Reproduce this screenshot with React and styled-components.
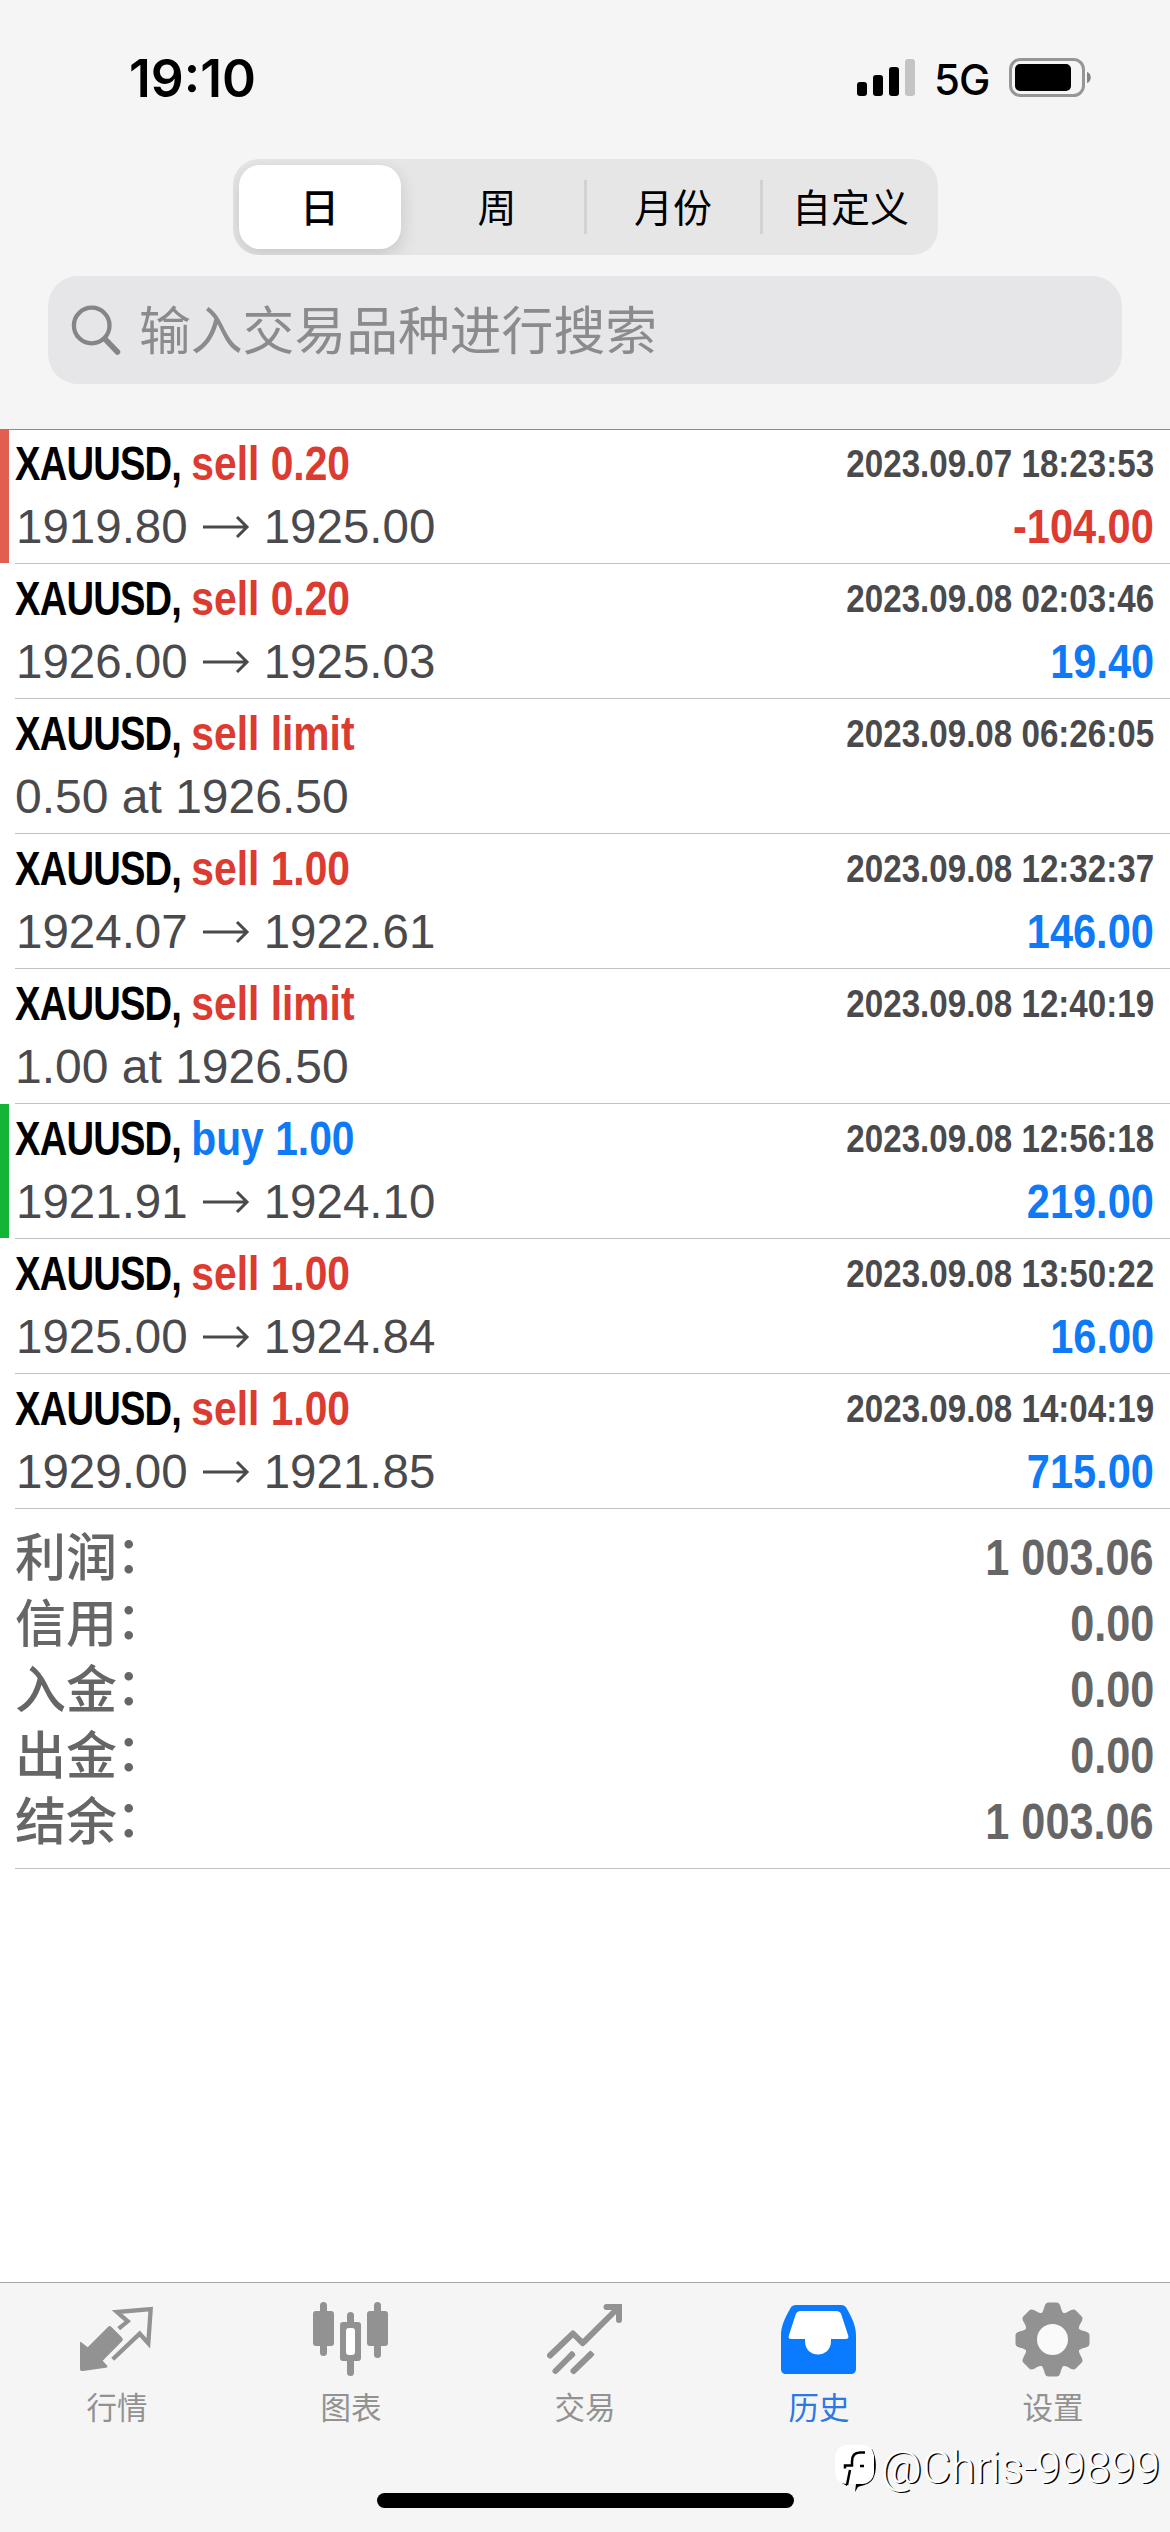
import React from 'react';
import styled, { createGlobalStyle } from 'styled-components';

const GlobalStyle = createGlobalStyle`
  * {
    box-sizing: border-box;
  }
  body {
    margin: 0;
    background: #fff;
    font-family: Inter, 'Noto Sans CJK SC', sans-serif;
  }
`;

// --- STYLES ---

const Screen = styled.div`
  display: flex;
  flex-direction: column;
  width: 1170px;
  height: 2532px;
  background: #fff;
  overflow: hidden;
`;

const Header = styled.header`
  height: 430px;
  display: flex;
  flex-direction: column;
  align-items: center;
  background: #f5f5f5;
  border-bottom: 1px solid #8c8c8e;
`;

const StatusBar = styled.div`
  align-self: stretch;
  height: 159px;
  padding: 0 78px 3px 129px;
  display: flex;
  align-items: center;
  justify-content: space-between;
`;

const Clock = styled.span`
  font-size: 51.5px;
  font-weight: 600;
  color: #000;
`;

const StatusIcons = styled.div`
  display: flex;
  align-items: center;
`;

const Network = styled.span`
  margin: 3px 20px 0 19px;
  width: 55px;
  font-size: 42px;
  line-height: 42px;
  font-weight: 500;
  letter-spacing: -1px;
  color: #000;
`;

const Segments = styled.div`
  width: 705px;
  height: 96px;
  padding: 6px 0 6px 6px;
  display: flex;
  align-items: center;
  border-radius: 26px;
  background: #e6e6e7;
  overflow: hidden;
`;

const Segment = styled.button`
  flex-shrink: 0;
  width: ${({ $active }) => ($active ? 162 : 176)}px;
  height: ${({ $active }) => ($active ? 84 : 54)}px;
  margin-right: ${({ $active }) => ($active ? 10 : 0)}px;
  padding: 0 0 5px;
  border: 0;
  border-right: ${({ $divider }) => ($divider ? '3px solid #d2d2d4' : '0')};
  border-radius: ${({ $active }) => ($active ? 21 : 0)}px;
  background: ${({ $active }) => ($active ? '#fff' : 'transparent')};
  box-shadow: ${({ $active }) => ($active ? '0 6px 18px rgba(0, 0, 0, 0.14)' : 'none')};
  font-family: 'Noto Sans CJK SC', sans-serif;
  font-size: 39px;
  line-height: 50px;
  font-weight: ${({ $active }) => ($active ? 500 : 400)};
  color: #000;
`;

const SearchBar = styled.div`
  width: 1074px;
  height: 108px;
  margin-top: 21px;
  padding-left: 23px;
  display: flex;
  align-items: center;
  gap: 16px;
  border-radius: 30px;
  background: #e6e6e8;
`;

const Placeholder = styled.span`
  padding-bottom: 5px;
  font-family: 'Noto Sans CJK SC', sans-serif;
  font-size: 51.8px;
  line-height: 60px;
  color: #8b8b8e;
`;

const Deals = styled.main`
  flex: 1;
  margin-top: -1px;
`;

const Deal = styled.section`
  position: relative;
  height: 135px;
  margin-left: 15px;
  padding: 0 16px 0 0;
  border-bottom: 1px solid #c2c2c4;
  display: flex;
  flex-direction: column;
`;

const Marker = styled.span`
  position: absolute;
  left: -15px;
  top: 0;
  width: 9px;
  height: 134px;
  background: ${({ $color }) => $color};
`;

const Line = styled.div`
  display: flex;
  justify-content: space-between;
  align-items: center;
  height: ${({ $height }) => $height}px;
  white-space: pre;
`;

// condensed bold face: regular width glyphs squeezed towards the row's edge
const Condensed = styled.span`
  display: block;
  font-family: 'Liberation Sans', sans-serif;
  font-weight: 700;
  font-size: ${({ $size }) => $size || 48}px;
  line-height: 56px;
  color: ${({ $color }) => $color || '#000'};
  transform: scaleX(${({ $scale }) => $scale || 0.865});
  transform-origin: ${({ $origin }) => $origin || 'right'} center;
`;

const Symbol = styled.span`
  display: inline-block;
  margin-right: -14px;
  letter-spacing: -1px;
  transform: scaleX(0.935);
  transform-origin: left center;
`;

const Side = styled.span`
  color: ${({ $color }) => $color};
`;

const Prices = styled.span`
  display: flex;
  align-items: center;
  padding-left: ${({ $order }) => ($order ? 0 : 1)}px;
  font-family: 'Liberation Sans', sans-serif;
  font-size: ${({ $order }) => ($order ? 48 : 47.5)}px;
  line-height: 56px;
  color: #4a4a4d;

  svg {
    margin: 0 14px 0 14px;
  }
`;

const Summary = styled.section`
  margin-left: 15px;
  padding: 16px 16px 13px 0;
  border-bottom: 1px solid #c2c2c4;
`;

const SummaryRow = styled.div`
  height: 66px;
  display: flex;
  align-items: center;
  justify-content: space-between;
`;

const SummaryLabel = styled.span`
  padding-top: 2px;
  font-family: 'Liberation Sans', 'Noto Sans CJK SC', sans-serif;
  font-size: 51px;
  line-height: 60px;
  font-weight: 500;
  color: #666;
`;

const Colon = styled.span`
  position: relative;
  top: -3px;
  left: -1px;
`;

const TabBar = styled.nav`
  position: relative;
  height: 250px;
  display: flex;
  align-items: flex-start;
  background: #f5f5f5;
  border-top: 1px solid #a8a8aa;
`;

const Tab = styled.a`
  flex: 1;
  padding-top: 19px;
  display: flex;
  flex-direction: column;
  align-items: center;
  font-family: 'Noto Sans CJK SC', sans-serif;
  font-size: 30.5px;
  line-height: 40px;
  color: ${({ $active }) => ($active ? '#2b78e8' : '#929292')};

  svg {
    margin-bottom: 8px;
  }
`;

const HomeIndicator = styled.div`
  position: absolute;
  left: 377px;
  bottom: 24px;
  width: 417px;
  height: 15px;
  border-radius: 8px;
  background: #000;
`;

const Watermark = styled.div`
  position: absolute;
  right: 10px;
  bottom: 38px;
  display: flex;
  align-items: center;
  gap: 4px;
  font-family: Roboto, sans-serif;
  font-size: 44.7px;
  line-height: 52px;
  font-weight: 300;
  color: #fff;
  text-shadow: 1.5px 1px 0 #000;
`;

// --- DATA ---

const RED = '#db3b30';
const BLUE = '#0f7af5';

const deals = [
  { side: 'sell 0.20', time: '2023.09.07 18:23:53', from: '1919.80', to: '1925.00', profit: '-104.00', marker: '#e25e50' },
  { side: 'sell 0.20', time: '2023.09.08 02:03:46', from: '1926.00', to: '1925.03', profit: '19.40' },
  { side: 'sell limit', time: '2023.09.08 06:26:05', order: '0.50 at 1926.50' },
  { side: 'sell 1.00', time: '2023.09.08 12:32:37', from: '1924.07', to: '1922.61', profit: '146.00' },
  { side: 'sell limit', time: '2023.09.08 12:40:19', order: '1.00 at 1926.50' },
  { side: 'buy 1.00', time: '2023.09.08 12:56:18', from: '1921.91', to: '1924.10', profit: '219.00', marker: '#12b535' },
  { side: 'sell 1.00', time: '2023.09.08 13:50:22', from: '1925.00', to: '1924.84', profit: '16.00' },
  { side: 'sell 1.00', time: '2023.09.08 14:04:19', from: '1929.00', to: '1921.85', profit: '715.00' },
];

const totals = [
  ['利润', '1 003.06'],
  ['信用', '0.00'],
  ['入金', '0.00'],
  ['出金', '0.00'],
  ['结余', '1 003.06'],
];

// --- ICONS ---

const Signal = () => (
  <svg width="58" height="38" viewBox="0 0 58 38">
    <rect x="0" y="23" width="10" height="14" rx="3" />
    <rect x="16" y="16" width="10" height="21" rx="3" />
    <rect x="32" y="8" width="10" height="29" rx="3" />
    <rect x="48" y="0" width="10" height="37" rx="3" fill="#c4c4c4" />
  </svg>
);

const Battery = () => (
  <svg width="83" height="40" viewBox="0 0 83 40">
    <rect x="1.5" y="1.5" width="73" height="36" rx="10" fill="none" stroke="#969696" strokeWidth="3" />
    <rect x="6" y="6" width="56" height="27" rx="5" />
    <path d="M78 14c5 1 5 10 0 11z" fill="#858585" />
  </svg>
);

const SearchIcon = () => (
  <svg width="52" height="52" viewBox="0 0 52 52" fill="none" stroke="#858588" strokeWidth="4.3">
    <circle cx="20.7" cy="21.5" r="17.8" />
    <path d="M34 35l12.500 13" strokeWidth="5.5" strokeLinecap="round" />
  </svg>
);

const Arrow = () => (
  <svg width="48" height="24" viewBox="0 0 48 24" fill="none" stroke="#4a4a4d" strokeWidth="3">
    <path d="M1 12h44M35 2l10 10l-10 10" />
  </svg>
);

const QuotesIcon = () => (
  <svg width="76" height="76" viewBox="0 0 76 76" fill="#929292">
    <path d="M1 40l1 0l6.700 5.300l19.500-19.500c1.800-2.200 2.800-2.200 4.500-.5l10.200 10.200c1.500 1.800 1 3-.2 4L23.700 58.700l4.600 5c.5 1.300-.3 1.800-1.500 2L4 69c-2 .2-3-.5-3-2.500z" />
    <path d="M39.700 26.700l9-7.400L38 10l33.700-3l-2.400 34.300l-8.600-9.600l-27 25.600" fill="none" stroke="#929292" strokeWidth="4.3" />
  </svg>
);

const ChartIcon = () => (
  <svg width="76" height="76" viewBox="0 0 76 76" fill="#929292">
    <rect x="7" y="0" width="7" height="54" rx="3.5" />
    <rect x="0" y="9" width="21" height="35" rx="3" />
    <rect x="61" y="0" width="7" height="56" rx="3.5" />
    <rect x="54" y="9" width="21" height="35" rx="3" />
    <rect x="34" y="10" width="7" height="64" rx="3.5" />
    <rect x="27" y="20" width="21" height="39" rx="3" />
    <rect x="33" y="26" width="9" height="27" rx="3" fill="#fff" />
  </svg>
);

const TradeIcon = () => (
  <svg width="76" height="76" viewBox="0 0 76 76" fill="none" stroke="#929292" strokeWidth="6" strokeLinecap="round">
    <path d="M3 53.500l23-22l9.700 9.700L71.500 5.500" strokeLinejoin="round" />
    <path d="M59.500 5h12.500v13" />
    <path d="M8.500 69l16.500-16.500M26.500 69l17-16.500" />
    <path d="M22 55.500l4.500-4.500M41 55l4.500-4.500" strokeLinecap="butt" />
  </svg>
);

const HistoryIcon = () => (
  <svg width="76" height="76" viewBox="0 0 76 76">
    <path d="M15 3h45c3 0 4.500 1 6 4c5 9 9 17 9 26v34c0 3-2 5-5 5H5c-3 0-5-2-5-5V33c0-9 4-17 9-26c1.500-3 3-4 6-4z" fill="#0a7aff" />
    <path d="M20 9h35c3 0 4.500 1 5.500 4l6.500 20c1 3 0 4-3 4H50v2c0 18-26 18-26 0v-2H11c-3 0-4-1-3-4l6.500-20c1-3 2.500-4 5.500-4z" fill="#fff" />
  </svg>
);

const SettingsIcon = () => (
  <svg width="76" height="76" viewBox="0 0 76 76" fill="#929292">
    {[0, 45, 90, 135].map((angle) => (
      <path
        key={angle}
        transform={`rotate(${angle} 37.5 37.5)`}
        d="M23.500 13.500c4-2 5-5 6-9c1-3 2-4 4-4h8c2 0 3 1 4 4c1 4 2 7 6 9v48c-4 2-5 5-6 9c-1 3-2 4-4 4h-8c-2 0-3-1-4-4c-1-4-2-7-6-9z"
      />
    ))}
    <circle cx="37.5" cy="37.5" r="15.500" fill="#fafafa" />
  </svg>
);

const WatermarkLogo = () => (
  <svg width="43" height="50" viewBox="0 0 43 50">
    <path d="M38 6c5 9 5 23 1 30c-4 6-10 6-15 8l-3 5l1-8zM8 40l5 3v-4z" fill="#000" />
    <rect x="1" y="2" width="39" height="39" rx="12" fill="#fff" />
    <path d="M31 9.500h-5c-6 0-8 4-8 9v4h-7v3M16 27l-3 15M26 23h4" fill="none" stroke="#000" strokeWidth="2.500" />
  </svg>
);

const tabs = [
  { label: '行情', Icon: QuotesIcon },
  { label: '图表', Icon: ChartIcon },
  { label: '交易', Icon: TradeIcon },
  { label: '历史', Icon: HistoryIcon, active: true },
  { label: '设置', Icon: SettingsIcon },
];

// --- COMPONENT ---

const DealRow = ({ deal }) => (
  <Deal>
    {deal.marker && <Marker $color={deal.marker} />}
    <Line $height={70}>
      <Condensed $scale={0.85} $origin="left">
        <Symbol>XAUUSD, </Symbol>
        <Side $color={deal.side.startsWith('buy') ? BLUE : RED}>{deal.side}</Side>
      </Condensed>
      <Condensed $size={39} $scale={0.85} $color="#4a4a4d">{deal.time}</Condensed>
    </Line>
    <Line $height={56}>
      <Prices $order={deal.order}>
        {deal.order || <>{deal.from}<Arrow />{deal.to}</>}
      </Prices>
      {deal.profit && (
        <Condensed $color={deal.profit.startsWith('-') ? RED : BLUE}>{deal.profit}</Condensed>
      )}
    </Line>
  </Deal>
);

const App = () => (
  <Screen>
    <GlobalStyle />
    <Header>
      <StatusBar>
        <Clock>19:10</Clock>
        <StatusIcons>
          <Signal />
          <Network>5G</Network>
          <Battery />
        </StatusIcons>
      </StatusBar>
      <Segments>
        <Segment $active>日</Segment>
        <Segment $divider>周</Segment>
        <Segment $divider>月份</Segment>
        <Segment>自定义</Segment>
      </Segments>
      <SearchBar>
        <SearchIcon />
        <Placeholder>输入交易品种进行搜索</Placeholder>
      </SearchBar>
    </Header>

    <Deals>
      {deals.map((deal) => (
        <DealRow key={deal.time} deal={deal} />
      ))}
      <Summary>
        {totals.map(([label, value]) => (
          <SummaryRow key={label}>
            <SummaryLabel>{label}<Colon>：</Colon></SummaryLabel>
            <Condensed $size={50} $color="#666">{value}</Condensed>
          </SummaryRow>
        ))}
      </Summary>
    </Deals>

    <TabBar>
      {tabs.map(({ label, Icon, active }) => (
        <Tab key={label} $active={active}>
          <Icon />
          {label}
        </Tab>
      ))}
      <HomeIndicator />
      <Watermark>
        <WatermarkLogo />
        @Chris-99899
      </Watermark>
    </TabBar>
  </Screen>
);

export default App;
